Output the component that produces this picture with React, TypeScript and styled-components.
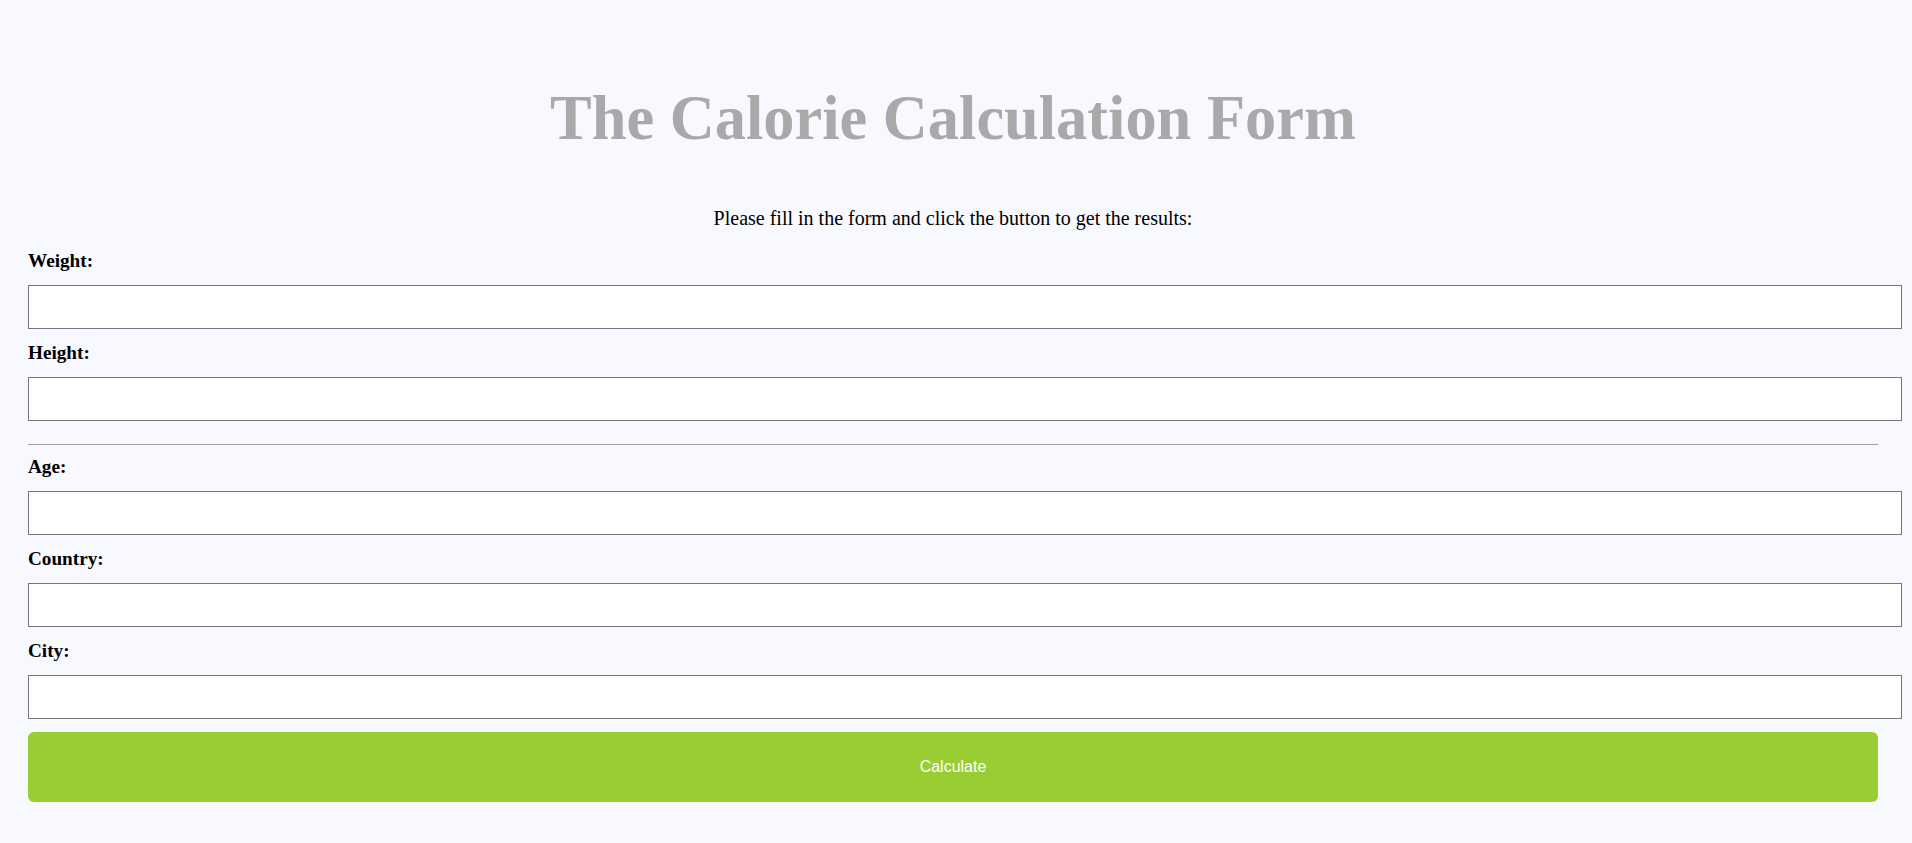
import React from "react";
import styled, { createGlobalStyle } from "styled-components";

const GlobalStyle = createGlobalStyle`
  html, body {
    margin: 0;
    padding: 0;
    background: #f8f8ff;
  }
  body {
    font-family: "Liberation Serif", "Times New Roman", serif;
    color: #000;
  }
`;

const Page = styled.div`
  box-sizing: border-box;
  width: 100%;
  min-height: 843px;
  padding: 82px 34px 0 28px;
`;

const Title = styled.h1`
  margin: 0;
  font-family: "Liberation Serif", "Times New Roman", serif;
  font-size: 62.4px;
  line-height: 72px;
  font-weight: bold;
  color: #a9a9a9;
  text-align: center;
`;

const Intro = styled.p`
  margin: 52.5px 0 20px;
  font-size: 20px;
  line-height: 23px;
  text-align: center;
  color: #000;
`;

const Form = styled.form`
  display: flex;
  flex-direction: column;
`;

const Label = styled.label`
  display: block;
  margin: 0 0 13px;
  font-size: 19.2px;
  line-height: 22px;
  font-weight: bold;
`;

const Input = styled.input`
  box-sizing: border-box;
  display: block;
  width: calc(100% + 24px);
  height: 44px;
  margin: 0 0 13px;
  padding: 0 11px;
  border: 1px solid #767676;
  border-radius: 0;
  background: #fff;
  font-size: 16px;
  outline: none;
`;

const Divider = styled.hr`
  width: 100%;
  margin: 10px 0 11px;
  border: none;
  border-top: 1px solid #a0a0a0;
  height: 0;
`;

const Button = styled.button`
  box-sizing: border-box;
  width: 100%;
  height: 70px;
  border: none;
  border-radius: 6px;
  background: #9acd32;
  color: #fff;
  font-family: "Liberation Sans", Arial, sans-serif;
  font-size: 16px;
  cursor: pointer;
`;

type FieldProps = { id: string; label: string };

const Field = ({ id, label }: FieldProps) => (
  <>
    <Label htmlFor={id}>{label}</Label>
    <Input id={id} type="text" />
  </>
);

export default function App() {
  return (
    <>
      <GlobalStyle />
      <Page>
        <Title>The Calorie Calculation Form</Title>
        <Intro>Please fill in the form and click the button to get the results:</Intro>
        <Form onSubmit={(e) => e.preventDefault()}>
          <Field id="weight" label="Weight:" />
          <Field id="height" label="Height:" />
          <Divider />
          <Field id="age" label="Age:" />
          <Field id="country" label="Country:" />
          <Field id="city" label="City:" />
          <Button type="submit">Calculate</Button>
        </Form>
      </Page>
    </>
  );
}
